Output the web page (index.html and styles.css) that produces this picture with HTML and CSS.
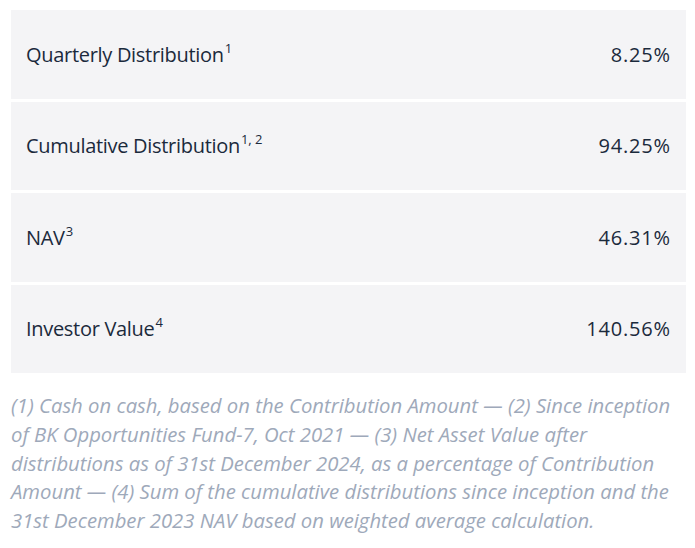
FILE: index.html
```html
<!DOCTYPE html>
<html lang="en">
<head>
<meta charset="utf-8">
<title>Fund performance</title>
<link rel="stylesheet" href="styles.css">
</head>
<body>
<div class="wrap">
  <div class="rows">
    <div class="row"><span class="label">Quarterly Distribution<sup>1</sup></span><span class="value">8.25%</span></div>
    <div class="row"><span class="label">Cumulative Distribution<sup>1, 2</sup></span><span class="value">94.25%</span></div>
    <div class="row"><span class="label">NAV<sup>3</sup></span><span class="value">46.31%</span></div>
    <div class="row"><span class="label">Investor Value<sup>4</sup></span><span class="value">140.56%</span></div>
  </div>
  <p class="notes">(1) Cash on cash, based on the Contribution Amount — (2) Since inception<br>of BK Opportunities Fund-7, Oct 2021 — (3) Net Asset Value after<br>distributions as of 31st December 2024, as a percentage of Contribution<br>Amount — (4) Sum of the cumulative distributions since inception and the<br>31st December 2023 NAV based on weighted average calculation.</p>
</div>
</body>
</html>
```
FILE: styles.css
```css
html, body {
  margin: 0;
  padding: 0;
  background: #ffffff;
}
.wrap {
  margin: 10px 9px 0 11px;
  font-family: "Open Sans", "Noto Sans", sans-serif;
}
.rows {
  display: flex;
  flex-direction: column;
  gap: 3px;
}
.row {
  height: 88.5px;
  box-sizing: border-box;
  padding: 0 16px 0 15px;
  background: #f4f4f6;
  display: flex;
  align-items: center;
  justify-content: space-between;
  color: #1b2a3c;
  font-size: 20px;
}
.label {
  letter-spacing: -0.3px;
}
.value {
  letter-spacing: 0.8px;
  margin-right: -0.8px;
}
.label sup {
  font-size: 13px;
  letter-spacing: 0;
  line-height: 0;
  vertical-align: 9px;
  margin-left: 1px;
}
.notes {
  margin: 18px 0 0 0;
  font-size: 20.3px;
  line-height: 28.8px;
  font-style: italic;
  color: #9ea9ba;
  white-space: nowrap;
}
```
